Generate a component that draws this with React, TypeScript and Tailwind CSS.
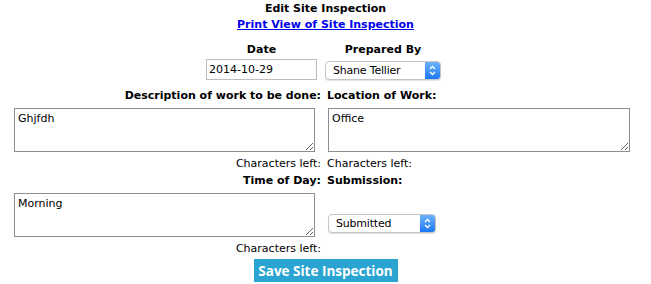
import React from 'react'

function MacSelect({ value, width }: { value: string; width: string }) {
  return (
    <div
      className={`${width} h-[19px] flex items-center justify-between rounded-[4px] border border-[#c4c4c4] bg-white shadow-[0_1px_1px_rgba(0,0,0,0.12)] overflow-hidden`}
    >
      <span className="pl-[7px] text-[11px] leading-[14px] tracking-[-0.2px] text-black">{value}</span>
      <span className="h-full w-[15px] flex items-center justify-center bg-gradient-to-b from-[#6cb2fb] to-[#1778f3]">
        <svg width="7" height="11" viewBox="0 0 7 11" fill="none" stroke="white" strokeWidth="1.3">
          <path d="M1 4 L3.5 1.5 L6 4" />
          <path d="M1 7 L3.5 9.5 L6 7" />
        </svg>
      </span>
    </div>
  )
}

export default function App() {
  return (
    <div className="w-[651px] h-[284px] bg-white text-black text-[11px] leading-[14px] font-['DejaVu_Sans',sans-serif]">
      <div className="pt-[2px] text-center font-bold">Edit Site Inspection</div>
      <div className="mt-[2px] text-center">
        <a href="#" className="font-bold text-[#0000ee] underline">Print View of Site Inspection</a>
      </div>

      <div className="mt-[11px] flex pl-[206px] font-bold">
        <div className="w-[111px] text-center">Date</div>
        <div className="ml-[8px] w-[116px] text-center">Prepared By</div>
      </div>
      <div className="mt-[2px] flex items-start pl-[206px]">
        <input
          defaultValue="2014-10-29"
          className="block w-[111px] h-[21px] border border-[#bdbdbd] pl-[2px] text-[11px] font-['DejaVu_Sans',sans-serif] outline-none"
        />
        <div className="ml-[8px] mt-[2px]">
          <MacSelect value="Shane Tellier" width="w-[116px]" />
        </div>
      </div>

      <div className="mt-[9px] flex pl-[11px]">
        <div className="w-[310px] text-right font-bold">Description of work to be done:</div>
        <div className="ml-[6px] w-[310px] font-bold">Location of Work:</div>
      </div>
      <div className="mt-[5px] flex items-start pl-[11px]">
        <div className="w-[310px] flex justify-end pr-[6px]">
          <textarea
            defaultValue="Ghjfdh"
            className="block w-[301px] h-[44px] border border-[#8e8e8e] p-[3px] text-[11px] leading-[14px] font-['DejaVu_Sans',sans-serif] outline-none"
          />
        </div>
        <div className="ml-[7px] flex">
          <textarea
            defaultValue="Office"
            className="block w-[302px] h-[44px] border border-[#8e8e8e] p-[3px] text-[11px] leading-[14px] font-['DejaVu_Sans',sans-serif] outline-none"
          />
        </div>
      </div>
      <div className="mt-[5px] flex pl-[11px]">
        <div className="w-[310px] text-right">Characters left:</div>
        <div className="ml-[6px]">Characters left:</div>
      </div>

      <div className="mt-[3px] flex pl-[11px] font-bold">
        <div className="w-[310px] text-right">Time of Day:</div>
        <div className="ml-[6px]">Submission:</div>
      </div>
      <div className="mt-[5px] flex items-start pl-[11px]">
        <div className="w-[310px] flex justify-end pr-[6px]">
          <textarea
            defaultValue="Morning"
            className="block w-[301px] h-[44px] border border-[#8e8e8e] p-[3px] text-[11px] leading-[14px] font-['DejaVu_Sans',sans-serif] outline-none"
          />
        </div>
        <div className="ml-[7px] mt-[21px]">
          <MacSelect value="Submitted" width="w-[108px]" />
        </div>
      </div>
      <div className="mt-[5px] flex pl-[11px]">
        <div className="w-[310px] text-right">Characters left:</div>
      </div>

      <div className="mt-[3px] flex justify-center">
        <button className="w-[144px] h-[23px] bg-[#2aa4d0] text-white font-bold text-[13.5px] font-['Open_Sans',sans-serif]">
          Save Site Inspection
        </button>
      </div>
    </div>
  )
}
